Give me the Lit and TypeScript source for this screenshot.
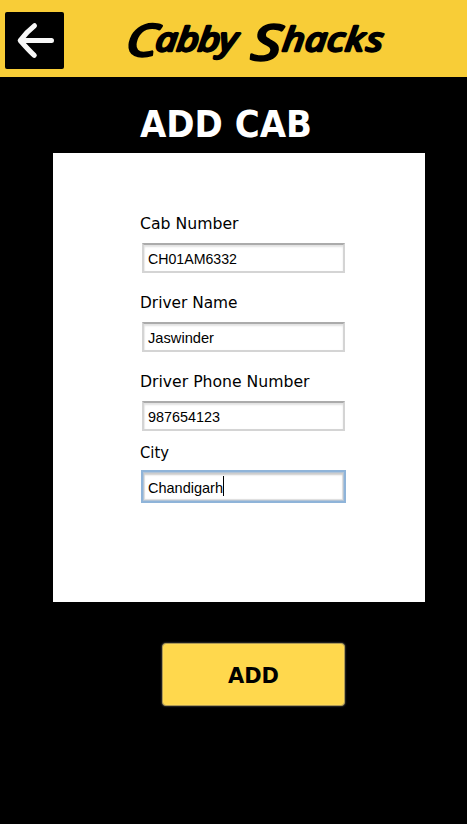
import { LitElement, html, css } from "lit";
import { customElement, property } from "lit/decorators.js";

@customElement("fit-text")
class FitText extends LitElement {
  @property() text = "";
  @property({ type: Number }) width = 100;
  @property({ type: Number }) size = 16;
  static styles = css`
    :host { display: block; }
    svg { display: block; overflow: visible; fill: currentColor; }
  `;
  render() {
    const h = Math.round(this.size * 1.2);
    return html`<svg width=${this.width} height=${h}>
      <text x="0" y=${this.size} font-size=${this.size} textLength=${this.width} lengthAdjust="spacingAndGlyphs">${this.text}</text>
    </svg>`;
  }
}

@customElement("cab-field")
class CabField extends LitElement {
  @property() label = "";
  @property() value = "";
  @property({ type: Number }) labelWidth = 100;
  @property({ type: Number }) valueWidth = 80;
  @property({ type: Boolean }) active = false;
  static styles = css`
    :host { display: block; height: 79px; }
    .label { font-family: "DejaVu Sans Condensed", "DejaVu Sans", sans-serif; font-stretch: condensed; color: #000; }
    .box {
      box-sizing: border-box; width: 203px; height: 30px; margin: 11px 0 0 2px;
      border: 2px solid #d4d4d4; border-top-color: #ababab;
      box-shadow: inset 0 2px 2px #e2e2e2, inset 1px 0 1px #eee;
      background: #fff; display: flex; align-items: center; padding: 0 0 2px 4px;
      font-family: "Liberation Sans", Arial, sans-serif; color: #000;
    }
    .active {
      width: 205px; height: 33px; margin: 9px 0 0 1px; border: 2px solid #8fb4d9; padding: 0 0 1px 5px;
      box-shadow: inset 0 0 0 1px #b3c4d6, inset 0 3px 2px #ccc, inset 0 0 1px 2px #ddd;
    }
    .caret { width: 1px; height: 20px; background: #000; }
  `;
  render() {
    return html`
      <fit-text class="label" .text=${this.label} .width=${this.labelWidth} .size=${16}></fit-text>
      <div class="box ${this.active ? "active" : ""}">
        <fit-text .text=${this.value} .width=${this.valueWidth} .size=${14.5}></fit-text>
        ${this.active ? html`<span class="caret"></span>` : ""}
      </div>`;
  }
}

@customElement("app-root")
class AppRoot extends LitElement {
  static styles = css`
    :host { display: flex; flex-direction: column; height: 824px; background: #000; }
    header { height: 77px; background: #f8cd37; display: flex; flex: none; }
    .back {
      width: 59px; height: 57px; margin: 12px 0 0 5px; padding: 0; border: 0;
      border-radius: 2px; background: #000; flex: none;
    }
    .back svg { display: block; }
    .brand { display: block; margin-left: 56px; font-family: "Noto Sans", sans-serif; font-weight: 400; font-style: italic; }
    .title {
      margin: 23px 0 0 140px; height: 53px; color: #fff; font-weight: 700;
      font-family: "DejaVu Sans Condensed", "DejaVu Sans", sans-serif; font-stretch: condensed;
    }
    .card { box-sizing: border-box; width: 372px; height: 449px; margin-left: 53px; padding: 60px 0 0 87px; background: #fff; flex: none; }
    .short { height: 71px; }
    .add {
      box-sizing: border-box; width: 183px; height: 63px; margin: 41px 0 0 162px; padding: 0 0 2px;
      border: 1px solid #b09a50; border-radius: 4px; background: #ffd84d; color: #000;
      display: flex; align-items: center; justify-content: center; flex: none;
      font-family: "DejaVu Sans Condensed", "DejaVu Sans", sans-serif; font-stretch: condensed; font-weight: 700;
      box-shadow: inset 0 0 1px #fff0a8, 0 0 2px #777;
    }
  `;
  render() {
    return html`
      <header>
        <button class="back" aria-label="Back">
          <svg width="59" height="57" fill="none" stroke="#f7f7f7" stroke-width="5" stroke-linecap="round" stroke-linejoin="round">
            <path d="M46.5 28.5H16M29.5 13.7C24 18 20 22 15.2 28.5C20 34 24 38.5 29.3 43.4" />
          </svg>
        </button>
        <svg class="brand" width="270" height="77" fill="#000" stroke="#000" stroke-width="2.6" stroke-linejoin="round" aria-label="Cabby Shacks">
          <text transform="translate(5 56) skewX(-6) scale(1.2 1)" font-size="44">C</text>
          <text transform="translate(-2 50.5) skewX(-6) scale(1.15 1)" x="32 50.5 69 87.5" font-size="33">abby</text>
          <text transform="translate(130 60) skewX(-6) scale(1.2 1)" font-size="49">S</text>
          <text transform="translate(-2 50.5) skewX(-6) scale(1.15 1)" x="142.5 162 181 197 215.5" font-size="33">hacks</text>
        </svg>
      </header>
      <fit-text class="title" .text=${"ADD CAB"} .width=${172} .size=${37}></fit-text>
      <main class="card">
        <cab-field label="Cab Number" .labelWidth=${98.5} value="CH01AM6332" .valueWidth=${89}></cab-field>
        <cab-field label="Driver Name" .labelWidth=${97.5} value="Jaswinder" .valueWidth=${66}></cab-field>
        <cab-field class="short" label="Driver Phone Number" .labelWidth=${169.5} value="987654123" .valueWidth=${72}></cab-field>
        <cab-field label="City" .labelWidth=${29} value="Chandigarh" .valueWidth=${75} active></cab-field>
      </main>
      <button class="add"><fit-text .text=${"ADD"} .width=${51} .size=${21.5}></fit-text></button>
    `;
  }
}
